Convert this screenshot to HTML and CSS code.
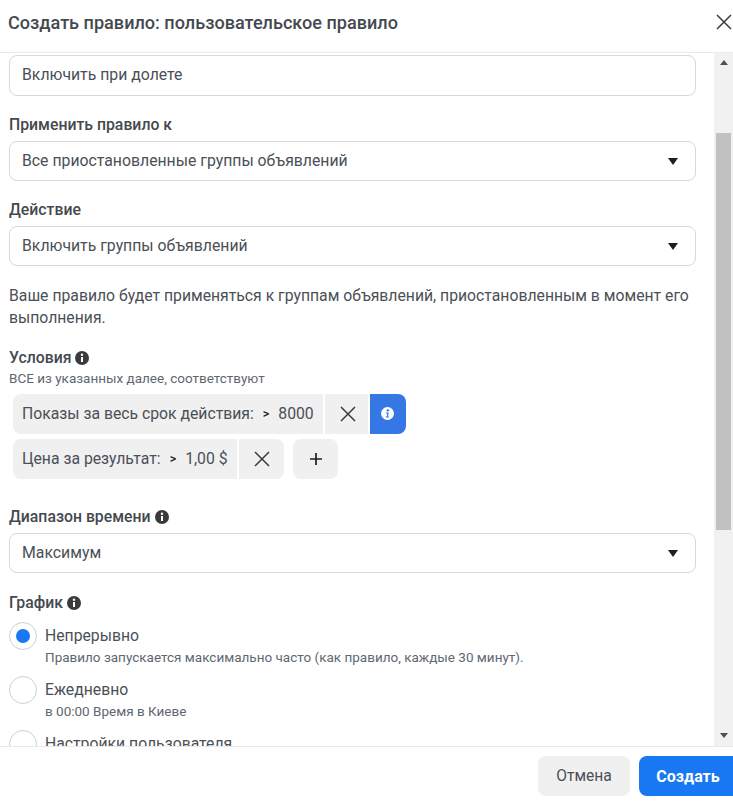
FILE: index.html
```html
<!DOCTYPE html>
<html lang="ru">
<head>
<meta charset="utf-8">
<title>Создать правило</title>
<link rel="stylesheet" href="styles.css">
</head>
<body>
<div class="dialog">
  <header class="head">
    <h1 class="title">Создать правило: пользовательское правило</h1>
    <button class="close" aria-label="Закрыть">
      <svg width="16" height="16" viewBox="0 0 16 16"><path d="M1 1l14 14M15 1L1 15" class="x-stroke"/></svg>
    </button>
  </header>
  <div class="middle">
    <main class="content">
      <div class="field input-box">Включить при долете</div>

      <div class="label label-first">Применить правило к</div>
      <div class="field select-box"><span>Все приостановленные группы объявлений</span><i class="caret"></i></div>

      <div class="label label-next">Действие</div>
      <div class="field select-box"><span>Включить группы объявлений</span><i class="caret"></i></div>

      <p class="note">Ваше правило будет применяться к группам объявлений, приостановленным в момент его выполнения.</p>

      <div class="label label-cond">Условия
        <svg class="info" viewBox="0 0 14 14"><circle cx="7" cy="7" r="7" class="info-bg"/><circle cx="7" cy="3.8" r="1.2" class="info-fg"/><rect x="6" y="6" width="2" height="5" class="info-fg"/></svg>
      </div>
      <div class="hint">ВСЕ из указанных далее, соответствуют</div>

      <div class="chips">
        <div class="chip-row">
          <div class="chip chip-left">Показы за весь срок действия:<b class="op">&gt;</b>8000</div>
          <div class="chip chip-x chip-x-mid"><svg width="16" height="16" viewBox="0 0 16 16"><path d="M1 1l14 14M15 1L1 15" class="x-stroke"/></svg></div>
          <div class="chip chip-info"><svg width="13" height="13" viewBox="0 0 14 14"><circle cx="7" cy="7" r="7" fill="#fff"/><circle cx="7.4" cy="3.6" r="1.3" fill="#3578e5"/><path d="M5.4 6h3l-.9 4.2h1v1H5.3v-1h.9l.6-3.1H5.4z" fill="#3578e5"/></svg></div>
        </div>
        <div class="chip-row">
          <div class="chip chip-left">Цена за результат:<b class="op">&gt;</b>1,00 $</div>
          <div class="chip chip-x chip-x-end"><svg width="16" height="16" viewBox="0 0 16 16"><path d="M1 1l14 14M15 1L1 15" class="x-stroke"/></svg></div>
          <div class="chip chip-plus"><svg width="12" height="12" viewBox="0 0 12 12"><path d="M6 0v12M0 6h12" class="plus-stroke"/></svg></div>
        </div>
      </div>

      <div class="label label-range">Диапазон времени
        <svg class="info" viewBox="0 0 14 14"><circle cx="7" cy="7" r="7" class="info-bg"/><circle cx="7" cy="3.8" r="1.2" class="info-fg"/><rect x="6" y="6" width="2" height="5" class="info-fg"/></svg>
      </div>
      <div class="field select-box"><span>Максимум</span><i class="caret"></i></div>

      <div class="label label-graph">График
        <svg class="info" viewBox="0 0 14 14"><circle cx="7" cy="7" r="7" class="info-bg"/><circle cx="7" cy="3.8" r="1.2" class="info-fg"/><rect x="6" y="6" width="2" height="5" class="info-fg"/></svg>
      </div>

      <div class="radio-row">
        <span class="radio radio-on"></span>
        <div><div class="radio-title">Непрерывно</div><div class="radio-sub">Правило запускается максимально часто (как правило, каждые 30 минут).</div></div>
      </div>
      <div class="radio-row">
        <span class="radio"></span>
        <div><div class="radio-title">Ежедневно</div><div class="radio-sub">в 00:00 Время в Киеве</div></div>
      </div>
      <div class="radio-row">
        <span class="radio"></span>
        <div><div class="radio-title">Настройки пользователя</div></div>
      </div>
    </main>
    <div class="scrollbar">
      <div class="arrow-up"></div>
      <div class="track"><div class="thumb"></div></div>
      <div class="arrow-down"></div>
    </div>
  </div>
  <footer class="foot">
    <button class="btn btn-cancel">Отмена</button>
    <button class="btn btn-create">Создать</button>
  </footer>
</div>
</body>
</html>
```
FILE: styles.css
```css
* { box-sizing: border-box; }
html, body { margin: 0; height: 100%; }
body { font-family: Roboto, "Liberation Sans", sans-serif; color: #444950; background: #fff; overflow: hidden; }
.dialog { width: 733px; height: 805px; display: flex; flex-direction: column; }
.head { height: 53px; flex: none; display: flex; align-items: center; justify-content: space-between; padding: 0 1px 8px 8px; border-bottom: 1px solid #e9eaeb; }
.title { margin: 0; font-size: 18.1px; font-weight: 500; color: #444950; }
.close { border: 0; background: none; padding: 0; width: 16px; height: 16px; margin-right: 0; }
.close svg { display: block; }
.x-stroke { stroke: #3a3b3d; stroke-width: 1.5; fill: none; }
.plus-stroke { stroke: #1c1e21; stroke-width: 1.7; fill: none; }
.middle { flex: 1; min-height: 0; display: flex; }
.content { flex: 1; min-width: 0; padding: 2px 18px 0 9px; overflow: hidden; }
.field { height: 40px; border: 1px solid #d6d8db; border-radius: 8px; padding: 0 12px 2px; font-size: 15.8px; display: flex; align-items: center; color: #4b4f56; }
.input-box { height: 41px; }
.select-box { justify-content: space-between; padding-right: 17px; }
.caret { width: 0; height: 0; border-left: 5.5px solid transparent; border-right: 5.5px solid transparent; border-top: 7px solid #1c1e21; margin-top: 3px; }
.label { font-size: 15.8px; font-weight: 500; color: #444950; line-height: 18px; display: flex; align-items: center; gap: 4px; }
.label-first { margin-top: 20px; margin-bottom: 7px; }
.label-next { margin-top: 20px; margin-bottom: 7px; }
.note { margin: 19px 0 0; font-size: 15.75px; line-height: 22px; color: #4b4f56; }
.label-cond { margin-top: 20px; }
.info { width: 14px; height: 14px; }
.info-bg { fill: #3a3b3d; }
.info-fg { fill: #fff; }
.hint { font-size: 13.5px; line-height: 16px; margin-top: 3px; color: #606770; }
.chips { margin-top: 8px; padding-left: 4px; display: flex; flex-direction: column; gap: 5px; }
.chip-row { display: flex; height: 40px; }
.chip { background: #f0f0f0; height: 40px; display: flex; align-items: center; justify-content: center; font-size: 15.75px; color: #4b4f56; }
.chip-left { padding: 0 9px 1px; border-radius: 8px 0 0 8px; margin-right: 2px; }
.op { font-size: 12.5px; font-weight: 500; margin: 0 9px; color: #1c1e21; }
.chip-x { width: 45px; }
.chip-x-mid { width: 43px; margin-right: 2px; padding-left: 3px; }
.chip-x-end { border-radius: 0 8px 8px 0; margin-right: 9px; padding-left: 1px; }
.chip-info { width: 36px; background: #3578e5; border-radius: 0 8px 8px 0; padding-bottom: 2px; }
.chip-plus { width: 45px; border-radius: 8px; padding-left: 2px; }
.label-range { margin-top: 29px; margin-bottom: 7px; }
.label-graph { margin-top: 21px; margin-bottom: 10px; }
.radio-row { display: flex; gap: 8px; height: 54px; }
.radio { width: 28px; height: 28px; flex: none; border: 1px solid #ced0d4; border-radius: 50%; background: #fff; display: flex; align-items: center; justify-content: center; }
.radio-on::after { content: ""; width: 14px; height: 14px; border-radius: 50%; background: #1877f2; }
.radio-title { font-size: 15.75px; line-height: 18px; margin-top: 5px; color: #4b4f56; }
.radio-sub { font-size: 13.5px; line-height: 16px; margin-top: 4px; color: #606770; }
.scrollbar { width: 19px; flex: none; background: #f1f1f1; display: flex; flex-direction: column; align-items: center; }
.arrow-up { width: 0; height: 0; margin: 7px 0 0; border-left: 4.5px solid transparent; border-right: 4.5px solid transparent; border-bottom: 5px solid #505050; }
.track { flex: 1; width: 100%; padding: 68px 2px 0; }
.thumb { height: 397px; background: #c1c1c1; }
.arrow-down { width: 0; height: 0; margin: 0 0 8px; border-left: 4.5px solid transparent; border-right: 4.5px solid transparent; border-top: 5px solid #505050; }
.foot { height: 59px; flex: none; border-top: 1px solid #e9eaeb; display: flex; justify-content: flex-end; gap: 9px; padding-top: 9px; }
.btn { height: 40px; border: 0; border-radius: 8px; font-family: inherit; font-size: 15.6px; padding: 0; }
.btn-cancel { width: 92px; background: #f0f0f0; color: #4b4f56; }
.btn-create { width: 94px; background: #1877f2; color: #fff; font-size: 16px; font-weight: 700; border-radius: 8px 0 0 8px; padding-left: 4px; }
```
